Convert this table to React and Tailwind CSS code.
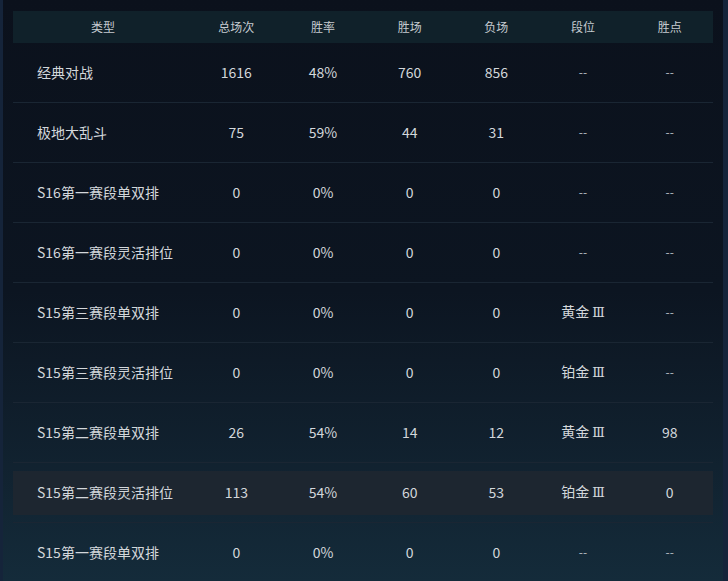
import React from 'react';

const columns = ['类型', '总场次', '胜率', '胜场', '负场', '段位', '胜点'];

const rows = [
  ['经典对战', '1616', '48%', '760', '856', '--', '--'],
  ['极地大乱斗', '75', '59%', '44', '31', '--', '--'],
  ['S16第一赛段单双排', '0', '0%', '0', '0', '--', '--'],
  ['S16第一赛段灵活排位', '0', '0%', '0', '0', '--', '--'],
  ['S15第三赛段单双排', '0', '0%', '0', '0', '黄金', '--'],
  ['S15第三赛段灵活排位', '0', '0%', '0', '0', '铂金', '--'],
  ['S15第二赛段单双排', '26', '54%', '14', '12', '黄金', '98'],
  ['S15第二赛段灵活排位', '113', '54%', '60', '53', '铂金', '0'],
  ['S15第一赛段单双排', '0', '0%', '0', '0', '--', '--'],
];

function Cell({ v }) {
  if (v === '--') return <div className="text-center text-xs text-[#b8bec5]">--</div>;
  if (v === '黄金' || v === '铂金')
    return (
      <div className="text-center">
        {v} <span className="font-['DejaVu_Serif',serif] text-[13px]">Ⅲ</span>
      </div>
    );
  return <div className="text-center">{v}</div>;
}

function App() {
  return (
    <div className="w-[728px] h-[581px] overflow-hidden bg-[#15243a] pl-[3px] pr-[5px] font-['Microsoft_YaHei','Noto_Sans_CJK_SC',sans-serif]">
      <div className="h-full px-[10px] pt-[11px] bg-linear-to-b from-[#0b111c] via-[#0c1521] to-[#142b3a]">
        {/* Header */}
        <div className="grid grid-cols-[180px_repeat(6,1fr)] h-8 items-center bg-[#10212a] text-xs text-[#c6cbd0] pb-px">
          {columns.map((c) => (
            <div key={c} className="text-center">{c}</div>
          ))}
        </div>

        {/* Rows */}
        {rows.map((r, i) => (
          <div key={r[0]} className="h-[60px] border-b border-[#1a2633] pt-2 pb-[7px]">
            <div
              className={
                'grid grid-cols-[180px_repeat(6,1fr)] h-[44px] items-center pb-[2px] text-sm text-[#d3d7db] ' +
                (i === 7 ? 'bg-[#1d2630]' : '')
              }
            >
              <div className="pl-6">{r[0]}</div>
              {r.slice(1).map((v, j) => (
                <Cell key={j} v={v} />
              ))}
            </div>
          </div>
        ))}
      </div>
    </div>
  );
}

export default App;
